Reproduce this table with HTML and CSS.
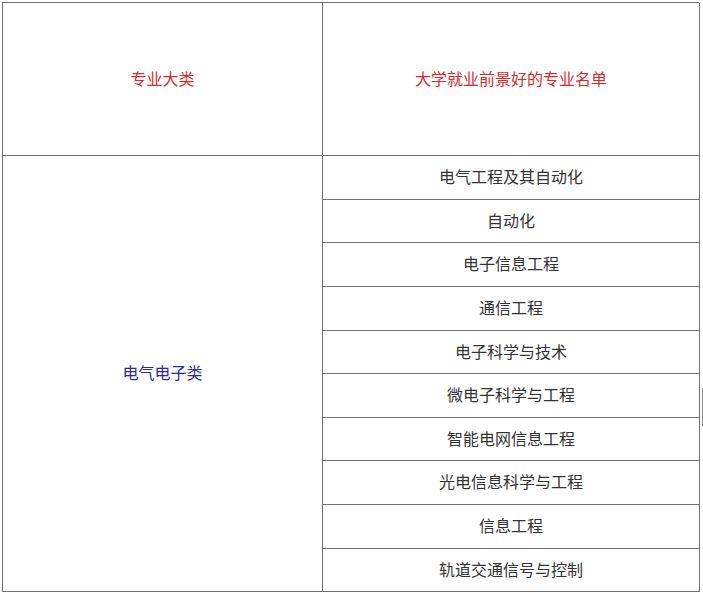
FILE: index.html
```html
<!DOCTYPE html>
<html lang="zh-CN">
<head>
<meta charset="utf-8">
<title>专业表</title>
<link rel="stylesheet" href="styles.css">
</head>
<body>
<div class="table">
  <div class="cell head">专业大类</div>
  <div class="cell head">大学就业前景好的专业名单</div>
  <div class="cell cat">电气电子类</div>
  <div class="cell">电气工程及其自动化</div>
  <div class="cell">自动化</div>
  <div class="cell">电子信息工程</div>
  <div class="cell">通信工程</div>
  <div class="cell">电子科学与技术</div>
  <div class="cell">微电子科学与工程</div>
  <div class="cell">智能电网信息工程</div>
  <div class="cell">光电信息科学与工程</div>
  <div class="cell">信息工程</div>
  <div class="cell">轨道交通信号与控制</div>
</div>
<div class="edge-mark"></div>
</body>
</html>
```

FILE: styles.css
```css
html, body {
  margin: 0;
  padding: 0;
  background: #ffffff;
}
body {
  position: relative;
  width: 703px;
  height: 593px;
  overflow: hidden;
  font-family: "Noto Sans CJK SC", "Microsoft YaHei", sans-serif;
  font-size: 16px;
  color: #333333;
}
.table {
  margin: 2px 0 0 2px;
  width: 697px;
  display: grid;
  grid-template-columns: 320px 377px;
  grid-template-rows: 153px 44px 43px 44px 44px 43px 44px 43px 44px 44px 43px;
  border-top: 1px solid #707070;
  border-left: 1px solid #707070;
  box-sizing: border-box;
}
.cell {
  box-sizing: border-box;
  border-right: 1px solid #707070;
  border-bottom: 1px solid #707070;
  display: flex;
  align-items: center;
  justify-content: center;
  line-height: 1;
  padding-bottom: 3px;
}
.head {
  color: #d92a2a;
}
.cat {
  grid-column: 1;
  grid-row: 2 / span 10;
  color: #2a2aa8;
}
.edge-mark {
  position: absolute;
  left: 702px;
  top: 388px;
  width: 1px;
  height: 38px;
  background: #8a8a8a;
}
```
